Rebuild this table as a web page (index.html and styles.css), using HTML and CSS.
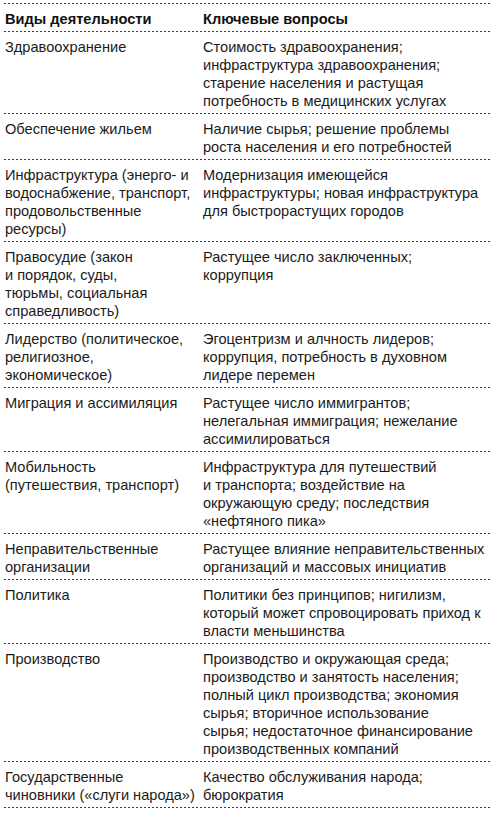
FILE: index.html
```html
<!DOCTYPE html>
<html lang="ru">
<head>
<meta charset="utf-8">
<link rel="stylesheet" href="styles.css">
</head>
<body>
<div class="table">
  <div class="row head">
    <div class="c1">Виды деятельности</div>
    <div class="c2">Ключевые вопросы</div>
  </div>
  <div class="row">
    <div class="c1">Здравоохранение</div>
    <div class="c2">Стоимость здравоохранения;<br>инфраструктура здравоохранения;<br>старение населения и растущая<br>потребность в медицинских услугах</div>
  </div>
  <div class="row">
    <div class="c1">Обеспечение жильем</div>
    <div class="c2">Наличие сырья; решение проблемы<br>роста населения и его потребностей</div>
  </div>
  <div class="row">
    <div class="c1">Инфраструктура (энерго- и<br>водоснабжение, транспорт,<br>продовольственные<br>ресурсы)</div>
    <div class="c2">Модернизация имеющейся<br>инфраструктуры; новая инфраструктура<br>для быстрорастущих городов</div>
  </div>
  <div class="row">
    <div class="c1">Правосудие (закон<br>и порядок, суды,<br>тюрьмы, социальная<br>справедливость)</div>
    <div class="c2">Растущее число заключенных;<br>коррупция</div>
  </div>
  <div class="row">
    <div class="c1">Лидерство (политическое,<br>религиозное,<br>экономическое)</div>
    <div class="c2">Эгоцентризм и алчность лидеров;<br>коррупция, потребность в духовном<br>лидере перемен</div>
  </div>
  <div class="row">
    <div class="c1">Миграция и ассимиляция</div>
    <div class="c2">Растущее число иммигрантов;<br>нелегальная иммиграция; нежелание<br>ассимилироваться</div>
  </div>
  <div class="row">
    <div class="c1">Мобильность<br>(путешествия, транспорт)</div>
    <div class="c2">Инфраструктура для путешествий<br>и транспорта; воздействие на<br>окружающую среду; последствия<br>«нефтяного пика»</div>
  </div>
  <div class="row">
    <div class="c1">Неправительственные<br>организации</div>
    <div class="c2">Растущее влияние неправительственных<br>организаций и массовых инициатив</div>
  </div>
  <div class="row">
    <div class="c1">Политика</div>
    <div class="c2">Политики без принципов; нигилизм,<br>который может спровоцировать приход к<br>власти меньшинства</div>
  </div>
  <div class="row">
    <div class="c1">Производство</div>
    <div class="c2">Производство и окружающая среда;<br>производство и занятость населения;<br>полный цикл производства; экономия<br>сырья; вторичное использование<br>сырья; недостаточное финансирование<br>производственных компаний</div>
  </div>
  <div class="row last">
    <div class="c1">Государственные<br>чиновники («слуги народа»)</div>
    <div class="c2">Качество обслуживания народа;<br>бюрократия</div>
  </div>
</div>
</body>
</html>
```

FILE: styles.css
```css
html, body {
  margin: 0;
  padding: 0;
  background: #ffffff;
}
body {
  padding: 3px 4px 0 4px;
  font-family: "Liberation Sans", Arial, sans-serif;
  font-size: 14.6px;
  line-height: 18px;
  color: #1b1b1b;
}
.table {
  width: 487px;
}
.row {
  display: grid;
  grid-template-columns: 199px 1fr;
  padding: 6px 0 3px 0;
  background-image: linear-gradient(to right, #3a3a3a 0 2px, transparent 2px 4px);
  background-size: 4px 1px;
  background-repeat: repeat-x;
  background-position: 0 0;
  border-top: 1px solid transparent;
  background-origin: border-box;
  white-space: nowrap;
}
.row.last {
  border-bottom: 1px solid transparent;
  background-image:
    linear-gradient(to right, #3a3a3a 0 2px, transparent 2px 4px),
    linear-gradient(to right, #3a3a3a 0 2px, transparent 2px 4px);
  background-position: 0 0, 0 100%;
}
.head {
  font-weight: bold;
  color: #111;
}
.c1 {
  padding-left: 1px;
}
```
